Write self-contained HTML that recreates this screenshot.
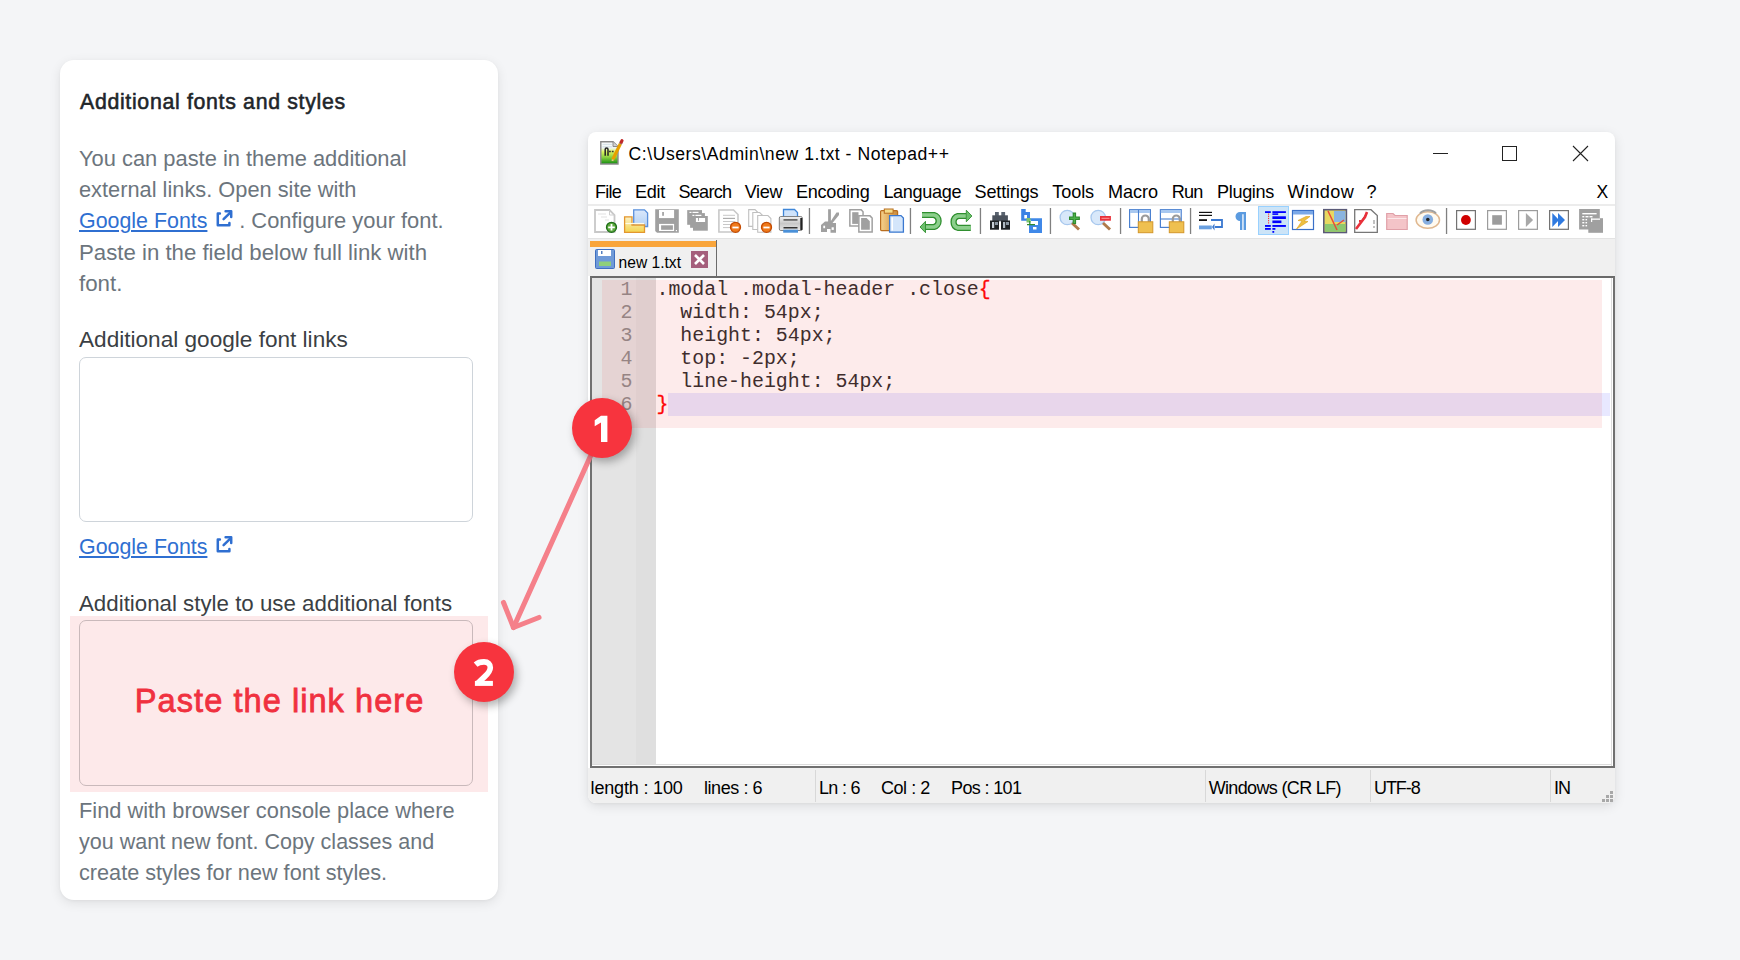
<!DOCTYPE html>
<html><head><meta charset="utf-8"><style>
html,body{margin:0;padding:0;}
body{width:1740px;height:960px;background:#f4f5f7;position:relative;overflow:hidden;font-family:'Liberation Sans', sans-serif;}
.t{position:absolute;white-space:nowrap;line-height:1;}
#card{position:absolute;left:60px;top:60px;width:438px;height:840px;background:#fff;border-radius:14px;box-shadow:0 3px 12px rgba(0,0,0,0.09),0 1px 3px rgba(0,0,0,0.04);}
.ta{position:absolute;box-sizing:border-box;border:1px solid #ced4da;border-radius:7px;background:#fff;}
.lnk{text-decoration:underline;text-decoration-thickness:2.2px;text-underline-offset:2.4px;}
#win{position:absolute;background:#fff;border-radius:8px;box-shadow:0 3px 12px rgba(0,0,0,0.10),0 1px 3px rgba(0,0,0,0.04);}
</style></head><body>
<div id="card"></div>
<div class="t" style="left:80.00px;top:92.47px;font-size:21.3px;color:#212529;font-weight:400;font-family:'Liberation Sans', sans-serif;-webkit-text-stroke:0.55px #212529;letter-spacing:0.68px">Additional fonts and styles</div>
<div class="t" style="left:79.00px;top:147.97px;font-size:21.88px;color:#6c757d;font-weight:400;font-family:'Liberation Sans', sans-serif;">You can paste in theme additional</div>
<div class="t" style="left:79.00px;top:179.43px;font-size:21.81px;color:#6c757d;font-weight:400;font-family:'Liberation Sans', sans-serif;">external links. Open site with</div>
<div class="t" style="left:79.00px;top:210.88px;font-size:21.4px;color:#2f6fd1;font-weight:400;font-family:'Liberation Sans', sans-serif;"><span class="lnk">Google Fonts</span></div>
<div class="t" style="left:239.20px;top:210.46px;font-size:21.9px;color:#6c757d;font-weight:400;font-family:'Liberation Sans', sans-serif;">. Configure your font.</div>
<div class="t" style="left:79.00px;top:241.59px;font-size:22.21px;color:#6c757d;font-weight:400;font-family:'Liberation Sans', sans-serif;">Paste in the field below full link with</div>
<div class="t" style="left:79.00px;top:272.72px;font-size:22.3px;color:#6c757d;font-weight:400;font-family:'Liberation Sans', sans-serif;">font.</div>
<div class="t" style="left:79.00px;top:329.06px;font-size:22.6px;color:#3b3f44;font-weight:400;font-family:'Liberation Sans', sans-serif;">Additional google font links</div>
<div class="ta" style="left:79px;top:357px;width:394px;height:165px;"></div>
<div class="t" style="left:79.00px;top:537.08px;font-size:21.4px;color:#2f6fd1;font-weight:400;font-family:'Liberation Sans', sans-serif;"><span class="lnk">Google Fonts</span></div>
<svg style="position:absolute;left:200px;top:194px" width="40" height="40" viewBox="200 520 40 40"><g fill="none" stroke="#2f6fd1" stroke-width="2.5" stroke-linecap="round" stroke-linejoin="round"><path d="M219.9 539.4 H217.8 V551.2 H229.4 V549"/><path d="M223.6 545.2 L230.5 538.3"/><path d="M225.6 537.3 H231.2 V542.9"/></g></svg>
<svg style="position:absolute;left:200px;top:520px" width="40" height="40" viewBox="200 520 40 40"><g fill="none" stroke="#2f6fd1" stroke-width="2.5" stroke-linecap="round" stroke-linejoin="round"><path d="M219.9 539.4 H217.8 V551.2 H229.4 V549"/><path d="M223.6 545.2 L230.5 538.3"/><path d="M225.6 537.3 H231.2 V542.9"/></g></svg>
<div class="t" style="left:79.00px;top:592.72px;font-size:22.3px;color:#3b3f44;font-weight:400;font-family:'Liberation Sans', sans-serif;">Additional style to use additional fonts</div>
<div style="position:absolute;left:70px;top:616px;width:418px;height:176px;background:#fde9ea"></div>
<div class="ta" style="left:79px;top:620px;width:394px;height:166px;background:transparent;border-color:#c9b9bb"></div>
<div class="t" style="left:134.80px;top:685.30px;font-size:32.6px;color:#f0313f;font-weight:400;font-family:'Liberation Sans', sans-serif;-webkit-text-stroke:0.8px #f0313f;letter-spacing:1.04px">Paste the link here</div>
<div class="t" style="left:79.00px;top:800.04px;font-size:21.8px;color:#6c757d;font-weight:400;font-family:'Liberation Sans', sans-serif;">Find with browser console place where</div>
<div class="t" style="left:79.00px;top:831.87px;font-size:21.53px;color:#6c757d;font-weight:400;font-family:'Liberation Sans', sans-serif;">you want new font. Copy classes and</div>
<div class="t" style="left:79.00px;top:862.46px;font-size:21.66px;color:#6c757d;font-weight:400;font-family:'Liberation Sans', sans-serif;">create styles for new font styles.</div>
<div id="win" style="left:588px;top:132px;width:1027px;height:670.5px"></div>
<svg style="position:absolute;left:597px;top:138px" width="28" height="30" viewBox="597 138 28 30">
<defs><linearGradient id="npg" x1="0" y1="0" x2="0" y2="1"><stop offset="0" stop-color="#ffffff"/><stop offset="0.28" stop-color="#eef4f4"/><stop offset="0.45" stop-color="#dcf460"/><stop offset="0.7" stop-color="#8ad040"/><stop offset="1" stop-color="#108a10"/></linearGradient></defs>
<path d="M600.8 141.7 H613 L618 146.5 V164 H600.8 Z" fill="url(#npg)" stroke="#8a8a8a" stroke-width="1.4"/>
<path d="M613 141.7 V146.5 H618" fill="#d0d0d0" stroke="#8a8a8a" stroke-width="1"/>
<path d="M602.5 144.3 H612 M602.5 146.8 H612" stroke="#c8d8e0" stroke-width="0.8"/>
<path d="M605.2 155.8 V149.5 A1.4 1.4 0 0 1 608 149.5 V155.8" fill="none" stroke="#222" stroke-width="1.5"/>
<path d="M609 151.5 h1.8 M611.8 151.5 h1.8" stroke="#333" stroke-width="1.6"/>
<path d="M612.8 159.5 L620.5 143.5" stroke="#e8a000" stroke-width="3.2"/>
<path d="M620.3 144 L621.3 142" stroke="#9aa0a8" stroke-width="3.2"/>
<path d="M621.2 142.2 L622 140.6" stroke="#c02828" stroke-width="3.2" stroke-linecap="round"/>
<path d="M612.8 159.5 L612.3 160.8" stroke="#f0c890" stroke-width="2"/>
</svg>
<div class="t" style="left:628.50px;top:146.30px;font-size:17.6px;color:#000;font-weight:400;font-family:'Liberation Sans', sans-serif;letter-spacing:0.55px">C:\Users\Admin\new 1.txt - Notepad++</div>
<div style="position:absolute;left:1433px;top:153px;width:15px;height:1px;background:#222"></div>
<div style="position:absolute;left:1502px;top:146px;width:15px;height:15px;box-sizing:border-box;border:1px solid #222"></div>
<svg style="position:absolute;left:1572px;top:145px" width="17" height="17" viewBox="0 0 17 17"><path d="M1 1 L16 16 M16 1 L1 16" stroke="#222" stroke-width="1.1"/></svg>
<div class="t" style="left:595.10px;top:183.07px;font-size:18.1px;color:#000;font-weight:400;font-family:'Liberation Sans', sans-serif;letter-spacing:-0.792px">File</div>
<div class="t" style="left:634.90px;top:183.07px;font-size:18.1px;color:#000;font-weight:400;font-family:'Liberation Sans', sans-serif;letter-spacing:-0.248px">Edit</div>
<div class="t" style="left:678.40px;top:183.07px;font-size:18.1px;color:#000;font-weight:400;font-family:'Liberation Sans', sans-serif;letter-spacing:-0.709px">Search</div>
<div class="t" style="left:744.70px;top:183.07px;font-size:18.1px;color:#000;font-weight:400;font-family:'Liberation Sans', sans-serif;letter-spacing:-0.376px">View</div>
<div class="t" style="left:795.90px;top:183.07px;font-size:18.1px;color:#000;font-weight:400;font-family:'Liberation Sans', sans-serif;letter-spacing:-0.235px">Encoding</div>
<div class="t" style="left:883.40px;top:183.07px;font-size:18.1px;color:#000;font-weight:400;font-family:'Liberation Sans', sans-serif;letter-spacing:-0.341px">Language</div>
<div class="t" style="left:974.50px;top:183.07px;font-size:18.1px;color:#000;font-weight:400;font-family:'Liberation Sans', sans-serif;letter-spacing:-0.175px">Settings</div>
<div class="t" style="left:1052.30px;top:183.07px;font-size:18.1px;color:#000;font-weight:400;font-family:'Liberation Sans', sans-serif;letter-spacing:-0.111px">Tools</div>
<div class="t" style="left:1108.10px;top:183.07px;font-size:18.1px;color:#000;font-weight:400;font-family:'Liberation Sans', sans-serif;letter-spacing:-0.078px">Macro</div>
<div class="t" style="left:1171.80px;top:183.07px;font-size:18.1px;color:#000;font-weight:400;font-family:'Liberation Sans', sans-serif;letter-spacing:-0.801px">Run</div>
<div class="t" style="left:1217.10px;top:183.07px;font-size:18.1px;color:#000;font-weight:400;font-family:'Liberation Sans', sans-serif;letter-spacing:-0.366px">Plugins</div>
<div class="t" style="left:1287.60px;top:183.07px;font-size:18.1px;color:#000;font-weight:400;font-family:'Liberation Sans', sans-serif;letter-spacing:0.371px">Window</div>
<div class="t" style="left:1366.50px;top:183.07px;font-size:18.1px;color:#000;font-weight:400;font-family:'Liberation Sans', sans-serif;">?</div>
<div class="t" style="left:1596.50px;top:183.58px;font-size:17.5px;color:#000;font-weight:400;font-family:'Liberation Sans', sans-serif;">X</div>
<div style="position:absolute;left:588px;top:204px;width:1027px;height:1.5px;background:#ececec"></div>
<div style="position:absolute;left:588px;top:237.5px;width:1027px;height:1.5px;background:#e3e3e3"></div>
<svg style="position:absolute;left:0;top:0" width="1740" height="960" viewBox="0 0 1740 960"><path d="M595 210 H609.5 L614.5 215 V232 H595 Z" fill="#fff" stroke="#c8c8c8" stroke-width="1.8"/><path d="M609.5 210 V215 H614.5" fill="none" stroke="#cfcfcf" stroke-width="1"/><path d="M598 214 h8 M601 217 h6 M605 220 h4" stroke="#ececec" stroke-width="1.5"/><circle cx="611.5" cy="227.3" r="5" fill="#5daa3c" stroke="#1f6e1a" stroke-width="1.3"/><path d="M611.5 224 V230.6 M608.2 227.3 H614.8" stroke="#fff" stroke-width="1.8"/><defs><linearGradient id="pgb" x1="0" y1="0" x2="0" y2="1"><stop offset="0" stop-color="#dbe8fb"/><stop offset="1" stop-color="#b4d2f5"/></linearGradient><linearGradient id="fy" x1="0" y1="0" x2="0" y2="1"><stop offset="0" stop-color="#fbf1c8"/><stop offset="1" stop-color="#f4d550"/></linearGradient><linearGradient id="clip" x1="0" y1="0" x2="1" y2="0"><stop offset="0" stop-color="#f6d28c"/><stop offset="1" stop-color="#c98a3a"/></linearGradient><linearGradient id="prn" x1="0" y1="0" x2="0" y2="1"><stop offset="0" stop-color="#f4f4f4"/><stop offset="0.5" stop-color="#c8c8c8"/><stop offset="1" stop-color="#e8e8e8"/></linearGradient></defs><path d="M633.7 209.8 H644.5 L647.6 213 V226.5 H633.7 Z" fill="url(#pgb)" stroke="#5a90dc" stroke-width="1.3"/><path d="M624.6 216.8 H632 V225 H644.5 V232.3 H624.6 Z" fill="url(#fy)" stroke="#e3962e" stroke-width="1.3"/><path d="M625.5 223.5 H644" stroke="#fffbe8" stroke-width="1.2"/><path d="M655.2 209.3 H678.8 V232.7 H657 L655.2 231 Z" fill="#a0a0a0"/><rect x="659" y="210" width="15.1" height="8.1" fill="#fff"/><rect x="662.2" y="212" width="1.7" height="3.8" fill="#a0a0a0"/><rect x="659" y="223.9" width="15.1" height="7.1" fill="#fff"/><rect x="661.1" y="225.3" width="11.8" height="4.5" fill="#a0a0a0"/><rect x="675.8" y="230" width="1.2" height="1.2" fill="#fff"/><rect x="687.2" y="210.1" width="14.8" height="14.7" fill="#a0a0a0"/><rect x="690.1" y="213.1" width="14.8" height="14.7" fill="#a0a0a0"/><rect x="693.0" y="216.0" width="14.8" height="14.7" fill="#a0a0a0"/><rect x="689.5" y="211.8" width="2" height="1.2" fill="#fff"/><rect x="692.5" y="211.8" width="6" height="1.2" fill="#fff"/><rect x="692.4" y="214.8" width="2" height="1.2" fill="#fff"/><rect x="695.4" y="214.8" width="6" height="1.2" fill="#fff"/><rect x="695.9" y="218" width="9.2" height="4" fill="#fff"/><rect x="698" y="218" width="0.9" height="2.8" fill="#a0a0a0"/><path d="M718.9 210 H733.5 L738 214.5 V232 H718.9 Z" fill="#fff" stroke="#c8c8c8" stroke-width="1.6"/><path d="M723 215.3 H735" stroke="#c8c8c8" stroke-width="1"/><path d="M723 218.4 H735" stroke="#c8c8c8" stroke-width="1"/><path d="M723 221.5 H735" stroke="#c8c8c8" stroke-width="1"/><path d="M723 224.5 H735" stroke="#c8c8c8" stroke-width="1"/><path d="M723 227.6 H735" stroke="#c8c8c8" stroke-width="1"/><path d="M723 218.4 H735" stroke="#a8a8a8" stroke-width="1"/><circle cx="735.5" cy="227.3" r="5" fill="#f07a1a" stroke="#c44a00" stroke-width="1.3"/><path d="M732.4 227.5 H738.6" stroke="#fff" stroke-width="1.8"/><path d="M748.7 209.6 H755 L758 212.6 V226.4 H748.7 Z" fill="#fff" stroke="#c0c0c0" stroke-width="1.1"/><path d="M752.8 212.5 H759.7 L762.7 215.5 V229.5 H752.8 Z" fill="#fff" stroke="#c0c0c0" stroke-width="1.1"/><path d="M757.7 215.5 H767.9 L770.9 218.5 V232.2 H757.7 Z" fill="#fff" stroke="#c0c0c0" stroke-width="1.1"/><circle cx="766.5" cy="227.3" r="5" fill="#f07a1a" stroke="#c44a00" stroke-width="1.3"/><path d="M763.4 227.5 H769.6" stroke="#fff" stroke-width="1.8"/><path d="M783.5 209.5 H794.5 L797.5 212.5 V219 H783.5 Z" fill="#cfe3fb" stroke="#3f86d8" stroke-width="1.3"/><rect x="779.3" y="216.5" width="23" height="14" rx="1.5" fill="url(#prn)" stroke="#777" stroke-width="0.9"/><rect x="783.5" y="219" width="14" height="1.8" fill="#6a6a6a"/><rect x="783.5" y="227" width="14" height="1.5" fill="#333"/><rect x="800.3" y="218" width="2" height="12" fill="#222"/><rect x="783.2" y="229.7" width="14.8" height="3" fill="#4a90d8"/><rect x="808.8" y="208" width="1.3" height="26" fill="#808080"/><rect x="909.8" y="208" width="1.3" height="26" fill="#808080"/><rect x="979.8" y="208" width="1.3" height="26" fill="#808080"/><rect x="1049.8000000000002" y="208" width="1.3" height="26" fill="#808080"/><rect x="1119.9" y="208" width="1.3" height="26" fill="#808080"/><rect x="1189.9" y="208" width="1.3" height="26" fill="#808080"/><rect x="1445.9" y="208" width="1.3" height="26" fill="#808080"/><path d="M828.1 209.2 H830.9 V221 L836.5 212.5 H839 V215 L832.5 223 H836 V232.8 H830.5 V229 H827 V232 H821 V225 L825 221.5 H828.1 Z" fill="#a0a0a0"/><rect x="823.3" y="225.7" width="1.8" height="2.5" fill="#fff"/><rect x="831.6" y="227.3" width="2.2" height="2.6" fill="#fff"/><path d="M849.1 209.1 H861.5 L863.8 211.4 V226.7 H849.1 Z" fill="#a0a0a0"/><path d="M850.6 210.6 H860.8 L862.3 212.1 V225.2 H850.6 Z" fill="#fff"/><rect x="852.2" y="212.2" width="6.3" height="11.7" fill="#a0a0a0"/><path d="M858.1 215.1 H870.3 L872.9 217.7 V232.7 H858.1 Z" fill="#a0a0a0"/><path d="M859.6 216.6 H869.5 L871.4 218.5 V231.2 H859.6 Z" fill="#fff"/><path d="M861.1 218.1 H866.6 L869.8 221.3 V229.8 H861.1 Z" fill="#a0a0a0"/><rect x="880.6" y="210.6" width="17" height="20" rx="1" fill="url(#clip)" stroke="#b86e20" stroke-width="1.2"/><rect x="884.3" y="209" width="8.8" height="4.2" fill="#f5dc8a" stroke="#b86e20" stroke-width="1"/><path d="M889.6 215.6 H901 L903.4 218 V232.2 H889.6 Z" fill="#d4e6fb" stroke="#3a78d0" stroke-width="1.3"/><rect x="891.5" y="217.5" width="1.5" height="13" fill="#fff"/><path d="M922 215 H934 A6.2 6.2 0 0 1 934 227 H925" fill="none" stroke="#2f8f2f" stroke-width="6.2"/><path d="M922 215 H934 A6.2 6.2 0 0 1 934 227 H925" fill="none" stroke="#8ccf8c" stroke-width="3.6"/><path d="M920 227 L925.5 221.3 V232.7 Z" fill="#6cc06c" stroke="#2f8f2f" stroke-width="0.9"/><path d="M970.8 227.9 H958 A6.2 6.2 0 0 1 958 216 H966" fill="none" stroke="#2f8f2f" stroke-width="6.2"/><path d="M970.8 227.9 H958 A6.2 6.2 0 0 1 958 216 H966" fill="none" stroke="#8ccf8c" stroke-width="3.6"/><path d="M971.9 216 L966.3 210.2 V221.8 Z" fill="#6cc06c" stroke="#2f8f2f" stroke-width="0.9"/><rect x="995" y="212" width="3.8" height="5" fill="#5a6470"/><rect x="1001.3" y="212" width="3.8" height="5" fill="#5a6470"/><rect x="992.3" y="215.3" width="15.6" height="6" fill="#4a525c"/><rect x="990" y="220.5" width="9" height="9.2" fill="#1e2226"/><rect x="1001" y="220.5" width="9" height="9.2" fill="#1e2226"/><rect x="992" y="222" width="2.2" height="6" fill="#c8d0d8"/><rect x="1003" y="222" width="2.2" height="6" fill="#b0bac4"/><rect x="995" y="222" width="3" height="3" fill="#8a96a2"/><rect x="1006" y="222" width="3" height="3" fill="#8a96a2"/><path d="M1021.2 209 H1025.7 V212 H1030 V220.7 H1021.2 Z M1024.3 215 V218.6 H1027 V215 Z" fill="#3a82e4" fill-rule="evenodd"/><path d="M1029 218.2 H1042 V232.9 H1029 V225 H1038 V221 H1031 Z M1033 227 V229.6 H1036.5 V227 Z" fill="#3f88e8" fill-rule="evenodd"/><rect x="1035" y="221" width="3" height="2.6" fill="#fff"/><rect x="1026.5" y="218" width="4" height="4.5" fill="#7cc46c"/><path d="M1029.8 221 V224.5 M1027 224.6 H1035" stroke="#2f8a2f" stroke-width="1.3"/><circle cx="1067.3" cy="217.5" r="7.2" fill="#d8e8fa" stroke="#a8c8ee" stroke-width="1.3"/><path d="M1072 223 L1079 229.5" stroke="#b07a4a" stroke-width="3"/><path d="M1074.4 212.6 V224.1 M1069 218.3 H1079.9" stroke="#2d8a2d" stroke-width="3.4"/><path d="M1074.4 213.8 V223 M1070.2 218.3 H1078.7" stroke="#4caf4c" stroke-width="1.4"/><circle cx="1098.2" cy="217.5" r="7.2" fill="#d8e8fa" stroke="#a8c8ee" stroke-width="1.3"/><path d="M1103 223 L1110 229.5" stroke="#b07a4a" stroke-width="3"/><rect x="1100" y="216" width="10.9" height="4.7" fill="#e8303a"/><rect x="1101.5" y="217.8" width="8" height="1" fill="#ff9a9a"/><rect x="1129.6" y="209.7" width="20.8" height="17.7" fill="#fff" stroke="#4a80d0" stroke-width="1.2"/><rect x="1130" y="210" width="20" height="3" fill="#a8c8f0"/><path d="M1138.5 210 V227.4" stroke="#4a80d0" stroke-width="1.1"/><path d="M1141.8 222 V219 A3.5 3.5 0 0 1 1148.8 219 V222" fill="none" stroke="#9a9a9a" stroke-width="2.2"/><rect x="1138.3" y="221.8" width="14.5" height="10.9" fill="#efc050" stroke="#d4962a" stroke-width="1"/><rect x="1160.4" y="209.7" width="20.8" height="17.7" fill="#fff" stroke="#4a80d0" stroke-width="1.2"/><rect x="1160.8" y="210" width="20" height="3" fill="#a8c8f0"/><path d="M1160.4 219 H1181.2" stroke="#4a80d0" stroke-width="1.1"/><path d="M1172.8 222 V219 A3.5 3.5 0 0 1 1179.8 219 V222" fill="none" stroke="#9a9a9a" stroke-width="2.2"/><rect x="1169.3" y="221.8" width="14.5" height="10.9" fill="#efc050" stroke="#d4962a" stroke-width="1"/><rect x="1199" y="211.8" width="13" height="1.2" fill="#111"/><rect x="1199" y="214.8" width="13" height="1.2" fill="#111"/><rect x="1199" y="219.2" width="8" height="1.8" fill="#111"/><path d="M1211 220 H1222 V227 H1215" fill="none" stroke="#3a78d0" stroke-width="1.8"/><path d="M1214.5 223.5 V230.5 L1212 227 Z" fill="#3a78d0"/><rect x="1199" y="225.5" width="12.8" height="3.8" fill="#6aa0e0"/><path d="M1240 212 H1246 V229.9 H1243.6 V214.2 H1242.3 V229.9 H1240 V221 A4.5 4.5 0 0 1 1240 212 Z" fill="#5b9be0"/><rect x="1258.5" y="206.5" width="30" height="28" fill="#cce4f7" stroke="#99d1ff" stroke-width="1"/><rect x="1265" y="211.2" width="5.8" height="1.8" fill="#0000ff"/><rect x="1272.4" y="211.2" width="13.5" height="1.8" fill="#0000ff"/><rect x="1272.4" y="213.3" width="5.8" height="1.6" fill="#0000ff"/><rect x="1272.4" y="216.3" width="13.5" height="2.7" fill="#0000ff"/><rect x="1272.4" y="220.5" width="9" height="2.6" fill="#0000ff"/><rect x="1265" y="225" width="5.8" height="1.9" fill="#0000ff"/><rect x="1272.4" y="225" width="13.5" height="1.9" fill="#0000ff"/><rect x="1265" y="228" width="5.8" height="1.8" fill="#0000ff"/><rect x="1272.4" y="228" width="3" height="1.8" fill="#0000ff"/><rect x="1272.4" y="231" width="1.8" height="1.8" fill="#0000ff"/><path d="M1268.6 213.5 V224" stroke="#ff2020" stroke-width="1" stroke-dasharray="1.2 1"/><rect x="1292.5" y="210.5" width="21" height="19" fill="#fff" stroke="#3a70c8" stroke-width="1.2"/><rect x="1293" y="211" width="20" height="3.5" fill="#7aa8e8"/><path d="M1306 216.5 L1298 220.5 L1302 221 L1296.5 229 L1308 221.5 L1304 221 L1310 216.5 Z" fill="#efc040" stroke="#d8a020" stroke-width="0.6"/><rect x="1323.8" y="209.7" width="22.6" height="22.8" fill="#e8d860" stroke="#5a5a78" stroke-width="1.6"/><rect x="1334" y="211" width="11.5" height="11" fill="#8ab4e0"/><rect x="1325" y="224" width="20.5" height="7.8" fill="#8cc870"/><path d="M1328 211 L1337 230 M1337 225 L1344 220" stroke="#e84a3a" stroke-width="1.5"/><path d="M1354.7 209.7 H1371 L1377.3 215.5 V232.3 H1354.7 Z" fill="#fff" stroke="#777" stroke-width="1.3"/><path d="M1356 229 L1365 217 L1367 212" stroke="#e8303a" stroke-width="2.6"/><rect x="1359" y="220" width="4" height="2" fill="#e8303a"/><path d="M1374 220 V224 M1374 226 V228" stroke="#999" stroke-width="1.2"/><path d="M1386.7 213.5 H1393 L1395 215.5 H1407.2 V229.5 H1386.7 Z" fill="#f4c4c8" stroke="#e0a0a8" stroke-width="1.2"/><rect x="1387.5" y="218" width="19" height="1" fill="#fce8ea"/><ellipse cx="1427.8" cy="220" rx="11.7" ry="8.2" fill="#fffaf0" stroke="#e0b890" stroke-width="1.5"/><circle cx="1427.8" cy="219.5" r="5.3" fill="#86aee0"/><circle cx="1427.8" cy="219.5" r="1.8" fill="#222"/><path d="M1420 213.5 A9 6 0 0 1 1436 213.5" stroke="#a0a0a0" stroke-width="2" fill="none"/><rect x="1456.6" y="210.6" width="18.8" height="18.7" fill="#fff" stroke="#737373" stroke-width="1.2"/><circle cx="1465.9" cy="220" r="4.9" fill="#d00000"/><rect x="1487.6" y="210.6" width="18.8" height="18.7" fill="#fff" stroke="#9c9c9c" stroke-width="1.2"/><rect x="1492.2" y="215.2" width="9.7" height="9.5" fill="#9c9c9c"/><rect x="1518.6" y="210.6" width="18.8" height="18.7" fill="#fff" stroke="#9c9c9c" stroke-width="1.2"/><path d="M1525.9 213 L1533.1 220 L1525.9 227 Z" fill="#a8a8a8"/><rect x="1549.6" y="210.6" width="18.8" height="18.7" fill="#fff" stroke="#737373" stroke-width="1.2"/><path d="M1552.3 213 L1559 220 L1552.3 227 Z M1558 213 L1565 220 L1558 227 Z" fill="#2f7ae0"/><rect x="1579.1" y="209" width="20.7" height="20.5" fill="#a0a0a0"/><rect x="1588.3" y="218.2" width="14.7" height="14.6" fill="#a0a0a0"/><rect x="1582.3" y="213" width="14.3" height="1.4" fill="#fff"/><rect x="1582.3" y="216" width="2" height="1.4" fill="#fff"/><rect x="1585.5" y="216" width="3" height="1.4" fill="#fff"/><rect x="1589.5" y="216" width="3" height="1.4" fill="#fff"/><rect x="1582.3" y="219" width="2" height="1.4" fill="#fff"/><rect x="1585.5" y="219" width="1.6" height="1.4" fill="#fff"/><rect x="1582.3" y="222" width="2" height="1.4" fill="#fff"/><rect x="1585.5" y="222" width="1.6" height="1.4" fill="#fff"/><rect x="1582.3" y="225" width="2" height="1.4" fill="#fff"/><rect x="1585.5" y="225" width="1.6" height="1.4" fill="#fff"/><rect x="1591" y="218.5" width="9" height="1.3" fill="#fff"/><rect x="1591" y="218.5" width="1.2" height="3.5" fill="#fff"/></svg>
<div style="position:absolute;left:588px;top:239px;width:1027px;height:37px;background:#f0f0f0"></div>
<div style="position:absolute;left:590px;top:241px;width:125.5px;height:6px;background:#f9a53b"></div>
<div style="position:absolute;left:715.5px;top:240px;width:1.5px;height:36px;background:#6b6b6b"></div>
<svg style="position:absolute;left:595px;top:249px" width="20" height="20" viewBox="0 0 20 20">
<rect x="0.5" y="0.5" width="19" height="19" rx="1" fill="#6f9ad8" stroke="#3f6fc0"/>
<rect x="3" y="1" width="13" height="6" fill="#fff"/><rect x="6" y="2" width="1.5" height="3" fill="#5580c0"/>
<rect x="4" y="12.5" width="12" height="4.5" fill="#8fcf7a"/>
</svg>
<div class="t" style="left:618.60px;top:254.59px;font-size:15.6px;color:#000;font-weight:400;font-family:'Liberation Sans', sans-serif;">new 1.txt</div>
<svg style="position:absolute;left:691px;top:251px" width="17" height="17" viewBox="0 0 17 17">
<rect x="0" y="0" width="17" height="17" fill="#a55f7c"/>
<path d="M4 4 L13 13 M13 4 L4 13" stroke="#fff" stroke-width="2.6"/>
</svg>
<div style="position:absolute;left:590px;top:276px;width:1024.7px;height:492px;box-sizing:border-box;border:2px solid #707070;border-top-color:#6a6a6a;background:#fff"></div>
<div style="position:absolute;left:592px;top:278px;width:44px;height:487px;background:#e4e4e4"></div>
<div style="position:absolute;left:636px;top:278px;width:20px;height:487px;background:#dfdfdf"></div>
<div style="position:absolute;left:592px;top:764px;width:1020.7px;height:2px;background:#fff;border-top:1px solid #dcdcdc;box-sizing:border-box"></div>
<div style="position:absolute;left:1610.7px;top:278px;width:2px;height:488px;background:#fff;border-left:1px solid #dcdcdc;box-sizing:border-box"></div>
<div style="position:absolute;left:668px;top:393px;width:942px;height:23px;background:#e8e8ff"></div>
<div class="t" style="left:656.50px;top:279.75px;font-size:19.9px;color:#2a2a2a;font-weight:400;font-family:'Liberation Mono', monospace;white-space:pre">.modal .modal-header .close<span style="color:#ff0000;-webkit-text-stroke:0.3px #ff0000">{</span></div>
<div class="t" style="left:620.50px;top:279.75px;font-size:19.9px;color:#8c8c8c;font-weight:400;font-family:'Liberation Mono', monospace;">1</div>
<div class="t" style="left:656.50px;top:302.75px;font-size:19.9px;color:#2a2a2a;font-weight:400;font-family:'Liberation Mono', monospace;white-space:pre">  width: 54px;</div>
<div class="t" style="left:620.50px;top:302.75px;font-size:19.9px;color:#8c8c8c;font-weight:400;font-family:'Liberation Mono', monospace;">2</div>
<div class="t" style="left:656.50px;top:325.75px;font-size:19.9px;color:#2a2a2a;font-weight:400;font-family:'Liberation Mono', monospace;white-space:pre">  height: 54px;</div>
<div class="t" style="left:620.50px;top:325.75px;font-size:19.9px;color:#8c8c8c;font-weight:400;font-family:'Liberation Mono', monospace;">3</div>
<div class="t" style="left:656.50px;top:348.75px;font-size:19.9px;color:#2a2a2a;font-weight:400;font-family:'Liberation Mono', monospace;white-space:pre">  top: -2px;</div>
<div class="t" style="left:620.50px;top:348.75px;font-size:19.9px;color:#8c8c8c;font-weight:400;font-family:'Liberation Mono', monospace;">4</div>
<div class="t" style="left:656.50px;top:371.75px;font-size:19.9px;color:#2a2a2a;font-weight:400;font-family:'Liberation Mono', monospace;white-space:pre">  line-height: 54px;</div>
<div class="t" style="left:620.50px;top:371.75px;font-size:19.9px;color:#8c8c8c;font-weight:400;font-family:'Liberation Mono', monospace;">5</div>
<div class="t" style="left:656.50px;top:394.75px;font-size:19.9px;color:#2a2a2a;font-weight:400;font-family:'Liberation Mono', monospace;white-space:pre"><span style="color:#ff0000;-webkit-text-stroke:0.3px #ff0000">}</span></div>
<div class="t" style="left:620.50px;top:394.75px;font-size:19.9px;color:#8c8c8c;font-weight:400;font-family:'Liberation Mono', monospace;">6</div>
<div style="position:absolute;left:602px;top:280px;width:1000px;height:148px;background:rgba(240,70,70,0.11)"></div>
<div style="position:absolute;left:588px;top:768px;width:1027px;height:34.5px;background:#f0f0f0;border-radius:0 0 8px 8px"></div>
<div style="position:absolute;left:814.5px;top:770px;width:1px;height:32px;background:#d8d8d8"></div>
<div style="position:absolute;left:1204.6px;top:770px;width:1px;height:32px;background:#d8d8d8"></div>
<div style="position:absolute;left:1369.5px;top:770px;width:1px;height:32px;background:#d8d8d8"></div>
<div style="position:absolute;left:1549.5px;top:770px;width:1px;height:32px;background:#d8d8d8"></div>
<div class="t" style="left:590.60px;top:779.36px;font-size:18.0px;color:#000;font-weight:400;font-family:'Liberation Sans', sans-serif;letter-spacing:-0.174px">length : 100</div>
<div class="t" style="left:703.90px;top:779.36px;font-size:18.0px;color:#000;font-weight:400;font-family:'Liberation Sans', sans-serif;letter-spacing:-0.421px">lines : 6</div>
<div class="t" style="left:818.90px;top:779.36px;font-size:18.0px;color:#000;font-weight:400;font-family:'Liberation Sans', sans-serif;letter-spacing:-0.667px">Ln : 6</div>
<div class="t" style="left:881.00px;top:779.36px;font-size:18.0px;color:#000;font-weight:400;font-family:'Liberation Sans', sans-serif;letter-spacing:-0.454px">Col : 2</div>
<div class="t" style="left:951.10px;top:779.36px;font-size:18.0px;color:#000;font-weight:400;font-family:'Liberation Sans', sans-serif;letter-spacing:-0.657px">Pos : 101</div>
<div class="t" style="left:1208.70px;top:779.36px;font-size:18.0px;color:#000;font-weight:400;font-family:'Liberation Sans', sans-serif;letter-spacing:-0.657px">Windows (CR LF)</div>
<div class="t" style="left:1374.00px;top:779.36px;font-size:18.0px;color:#000;font-weight:400;font-family:'Liberation Sans', sans-serif;letter-spacing:-1.077px">UTF-8</div>
<div class="t" style="left:1554.00px;top:779.36px;font-size:18.0px;color:#000;font-weight:400;font-family:'Liberation Sans', sans-serif;letter-spacing:-1.050px">IN</div>
<div style="position:absolute;left:1610px;top:791px;width:3px;height:3px;background:#a8a8a8"></div>
<div style="position:absolute;left:1606px;top:795px;width:3px;height:3px;background:#a8a8a8"></div>
<div style="position:absolute;left:1610px;top:795px;width:3px;height:3px;background:#a8a8a8"></div>
<div style="position:absolute;left:1602px;top:799px;width:3px;height:3px;background:#a8a8a8"></div>
<div style="position:absolute;left:1606px;top:799px;width:3px;height:3px;background:#a8a8a8"></div>
<div style="position:absolute;left:1610px;top:799px;width:3px;height:3px;background:#a8a8a8"></div>
<svg style="position:absolute;left:0;top:0" width="1740" height="960" viewBox="0 0 1740 960">
<g stroke="#f5808a" stroke-width="5.1" stroke-linecap="round" stroke-linejoin="round" fill="none">
<path d="M591 455 L513.5 627.5"/>
<path d="M503.5 602.5 L513.5 627.5 L539 617.5"/>
</g></svg>
<div style="position:absolute;left:572.1px;top:397.9px;width:60px;height:60px;border-radius:50%;background:#f7343e;box-shadow:3px 4px 8px rgba(0,0,0,0.30)"></div>
<div style="position:absolute;left:453.7px;top:641.7px;width:60px;height:60px;border-radius:50%;background:#f7343e;box-shadow:3px 4px 8px rgba(0,0,0,0.30)"></div>
<svg style="position:absolute;left:0;top:0" width="1740" height="960" viewBox="0 0 1740 960">
<path d="M601 415.7 H607.4 V441.9 H601 V422.6 L594.7 426.2 V420.3 Z" fill="#fff"/>
<path d="M475.6 664.6 C478.2 662.3 481 661.9 484 661.9 C488.2 661.9 490.3 664.3 490.3 667.4 C490.3 670.7 488.3 673.2 484.7 676.6 L477.4 683.6" fill="none" stroke="#fff" stroke-width="5.6"/>
<rect x="474.9" y="680.9" width="18" height="5" fill="#fff"/>
</svg>
</body></html>
